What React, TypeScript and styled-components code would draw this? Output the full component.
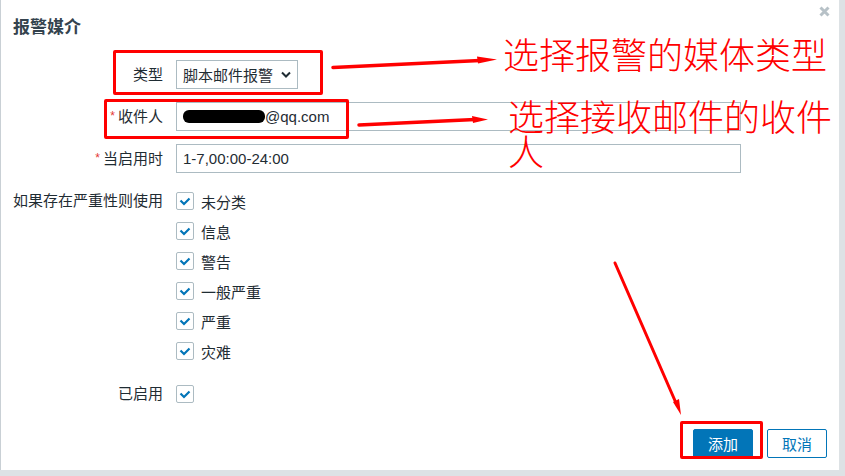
import styled, { createGlobalStyle } from 'styled-components';

const GlobalStyle = createGlobalStyle`
  body {
    margin: 0;
    background: #dde2e5;
    font-family: "Liberation Sans", "Noto Sans CJK SC", sans-serif;
  }
`;

const Dialog = styled.div`
  position: relative;
  box-sizing: border-box;
  width: 839px;
  height: 470px;
  background: #ffffff;
  border-left: 1px solid #c9d0d5;
  padding: 0 12px 12px 12px;
  display: flex;
  flex-direction: column;
  color: #1f2c33;
  font-size: 15px;
`;

const Header = styled.div`
  height: 50px;
  display: flex;
  justify-content: space-between;
  align-items: center;
`;

const Title = styled.h2`
  margin: 0;
  font-size: 17px;
  font-weight: bold;
  color: #34434e;
`;

const Close = styled.button`
  align-self: flex-start;
  margin: 6px -3px 0 0;
  padding: 0;
  width: 11px;
  height: 11px;
  border: 0;
  background: none;
  display: flex;
`;

const Form = styled.div`
  margin-top: 10px;
  display: grid;
  grid-template-columns: 150px 1fr;
  column-gap: 13px;
  row-gap: 13px;
  align-items: start;
`;

const Label = styled.div<{ $tall?: boolean }>`
  text-align: right;
  white-space: nowrap;
  line-height: ${(p) => (p.$tall ? '30px' : '29px')};
`;

const Required = styled.span`
  color: #e33734;
  font-size: 12px;
  margin-right: 3px;
  vertical-align: 2px;
`;

const Select = styled.div`
  box-sizing: border-box;
  width: 122px;
  height: 29px;
  border: 1px solid #acbbc2;
  padding: 0 6px;
  display: flex;
  align-items: center;
  justify-content: space-between;
`;

const TextBox = styled.div`
  box-sizing: border-box;
  width: 565px;
  height: 29px;
  border: 1px solid #acbbc2;
  padding: 0 6px;
  display: flex;
  align-items: center;
  white-space: nowrap;
`;

const Redacted = styled.span`
  display: inline-block;
  width: 82px;
  height: 13px;
  border-radius: 6px;
  background: #000;
`;

const CheckList = styled.div`
  display: flex;
  flex-direction: column;
`;

const CheckRow = styled.label`
  height: 30px;
  display: flex;
  align-items: center;
  gap: 7px;
`;

const Box = styled.span`
  box-sizing: border-box;
  width: 18px;
  height: 18px;
  border: 1px solid #acbbc2;
  border-radius: 2px;
  display: flex;
  align-items: center;
  justify-content: center;
`;

const Footer = styled.div`
  margin-top: auto;
  display: flex;
  justify-content: flex-end;
  gap: 14px;
`;

const Button = styled.button<{ $primary?: boolean }>`
  box-sizing: border-box;
  width: 60px;
  height: 29px;
  padding: 0;
  border-radius: 2px;
  border: 1px solid #0275b8;
  font: inherit;
  font-size: 15px;
  background: ${(p) => (p.$primary ? '#0275b8' : '#ffffff')};
  color: ${(p) => (p.$primary ? '#ffffff' : '#0275b8')};
`;

const Mark = styled.div<{ $x: number; $y: number; $w: number; $h: number }>`
  position: absolute;
  box-sizing: border-box;
  left: ${(p) => p.$x}px;
  top: ${(p) => p.$y}px;
  width: ${(p) => p.$w}px;
  height: ${(p) => p.$h}px;
  border: 3px solid #ff0000;
  border-radius: 2px;
  pointer-events: none;
`;

const Note = styled.div<{ $x: number; $y: number }>`
  position: absolute;
  left: ${(p) => p.$x}px;
  top: ${(p) => p.$y}px;
  width: 335px;
  color: #ff0000;
  font-family: "Noto Sans CJK SC", sans-serif;
  font-size: 36px;
  font-weight: 300;
  line-height: 35px;
  pointer-events: none;
`;

const Arrows = styled.svg`
  position: absolute;
  left: -1px;
  top: 0;
  pointer-events: none;
`;

const severities = ['未分类', '信息', '警告', '一般严重', '严重', '灾难'];

function Check() {
  return (
    <Box>
      <svg width="12" height="9" viewBox="0 0 12 9">
        <polyline
          points="1.5,3.5 5,7 10.5,1.5"
          fill="none"
          stroke="#0275b8"
          strokeWidth="2.2"
        />
      </svg>
    </Box>
  );
}

export default function App() {
  return (
    <>
      <GlobalStyle />
      <Dialog>
        <Header>
          <Title>报警媒介</Title>
          <Close aria-label="关闭">
            <svg width="11" height="11" viewBox="0 0 11 11">
              <path d="M1.5 1.5 L9.5 9.5 M9.5 1.5 L1.5 9.5" stroke="#b7c1c7" strokeWidth="3" />
            </svg>
          </Close>
        </Header>

        <Form>
          <Label>类型</Label>
          <Select>
            <span>脚本邮件报警</span>
            <svg width="10" height="7" viewBox="0 0 10 7">
              <polyline points="1,1.5 5,5.5 9,1.5" fill="none" stroke="#1f2c33" strokeWidth="2" />
            </svg>
          </Select>

          <Label>
            <Required>*</Required>收件人
          </Label>
          <TextBox>
            <Redacted />
            @qq.com
          </TextBox>

          <Label>
            <Required>*</Required>当启用时
          </Label>
          <TextBox>1-7,00:00-24:00</TextBox>

          <Label $tall>如果存在严重性则使用</Label>
          <CheckList>
            {severities.map((s) => (
              <CheckRow key={s}>
                <Check />
                {s}
              </CheckRow>
            ))}
          </CheckList>

          <Label $tall>已启用</Label>
          <CheckRow>
            <Check />
          </CheckRow>
        </Form>

        <Footer>
          <Button $primary>添加</Button>
          <Button>取消</Button>
        </Footer>

        <Mark $x={112} $y={50} $w={210} $h={45} />
        <Mark $x={103} $y={99} $w={245} $h={40} />
        <Mark $x={679} $y={421} $w={83} $h={38} />

        <Note $x={502} $y={36}>选择报警的媒体类型</Note>
        <Note $x={507} $y={98}>选择接收邮件的收件人</Note>

        <Arrows width="839" height="470" viewBox="0 0 839 470">
          <path d="M333 67.5 L480 60.5" stroke="#ff0000" strokeWidth="3.5" strokeLinecap="round" />
          <polygon points="477,56.5 497,59.5 478,63.5" fill="#ff0000" />
          <path d="M359 125 L475 119.5" stroke="#ff0000" strokeWidth="3.5" strokeLinecap="round" />
          <polygon points="472,116 488,119.5 473,123" fill="#ff0000" />
          <path d="M615 263 L676 403" stroke="#ff0000" strokeWidth="3" strokeLinecap="round" />
          <polygon points="673,402 681,415 679,399" fill="#ff0000" />
        </Arrows>
      </Dialog>
    </>
  );
}
